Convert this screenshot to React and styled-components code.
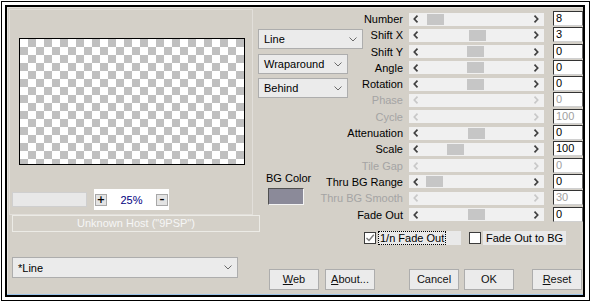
import React from 'react';
import styled, { createGlobalStyle } from 'styled-components';

const FONT = `"Liberation Sans", Arial, sans-serif`;

const Global = createGlobalStyle`
  html, body { margin: 0; padding: 0; background: #fff; }
  body { font-family: ${FONT}; font-size: 11px; color: #000; }
  * { box-sizing: border-box; }
`;

const Frame = styled.div`
  margin: 1px 0 0 1px;
  width: 589px;
  height: 300px;
  border: 1px solid #000;
  background: #fff;
  padding: 3px 4px 3px 3px;
`;

const Dialog = styled.div`
  width: 580px;
  height: 292px;
  border: 2px solid #000;
  background: #d4d0c8;
  box-shadow: inset 0 -1px 0 #9cc4ea, inset 1px 1px 0 #e4e1dc;
  display: grid;
  grid-template-columns: 246px 330px;
`;

const LeftCol = styled.div`
  display: flex;
  flex-direction: column;
  padding: 2px 0 0 2px;
`;

const PreviewPanel = styled.div`
  width: 244px;
  height: 206px;
  border: 1px solid #e2dfda;
  padding: 28px 0 0 2px;
  display: flex;
  flex-direction: column;
`;

const Preview = styled.div`
  width: 226px;
  height: 127px;
  margin-left: 7px;
  border: 1px solid #000;
  background-color: #fff;
  background-image: conic-gradient(#c0c0c0 25%, #fff 0 50%, #c0c0c0 0 75%, #fff 0);
  background-size: 16px 16px;
`;

const ZoomRow = styled.div`
  display: flex;
  align-items: center;
  margin-top: 24px;
  height: 21px;
`;

const ZoomField = styled.div`
  width: 75px;
  height: 15px;
  background: #e8e8e8;
  border: 1px solid #cfcfcf;
`;

const ZoomBox = styled.div`
  width: 75px;
  height: 21px;
  margin-left: 7px;
  background: #fff;
  display: flex;
  align-items: center;
  padding: 0 1px;
`;

const ZoomBtn = styled.div`
  width: 12px;
  height: 12px;
  background: #e4e4e4;
  border: 1px solid #a8a8a8;
  display: flex;
  align-items: center;
  justify-content: center;
  font-family: "DejaVu Sans", sans-serif;
  font-weight: bold;
  font-size: 10px;
  line-height: 1;
  color: #000;
`;

const ZoomText = styled.div`
  flex: 1;
  text-align: center;
  color: #000080;
`;

const HostBox = styled.div`
  margin: 0 0 0 3px;
  width: 248px;
  height: 17px;
  flex-shrink: 0;
  border: 1px solid #ecebe6;
  color: #f6f6f6;
  text-align: center;
  line-height: 15px;
`;

const Combo = styled.div`
  width: ${p => p.$w}px;
  height: ${p => p.$h || 20}px;
  margin-top: ${p => p.$mt || 0}px;
  margin-left: ${p => p.$ml || 0}px;
  background: #ebebeb;
  border: 1px solid #adadad;
  display: flex;
  align-items: center;
  justify-content: space-between;
  padding: 0 5px 0 5px;
  flex-shrink: 0;
`;

const RightCol = styled.div`
  display: flex;
  flex-direction: column;
`;

const TopArea = styled.div`
  display: flex;
`;

const SideCol = styled.div`
  width: 46px;
  display: flex;
  flex-direction: column;
  padding: 22px 0 0 5px;
`;

const BgLabel = styled.div`
  margin: 73px 0 0 8px;
  line-height: 14px;
  white-space: nowrap;
`;

const Swatch = styled.div`
  margin: 3px 0 0 10px;
  width: 36px;
  height: 17px;
  flex-shrink: 0;
  background: #8b8a99;
  border: 1px solid;
  border-color: #505050 #f4f4f4 #f4f4f4 #505050;
`;

const SliderTable = styled.div`
  margin-top: 4px;
  display: grid;
  grid-template-columns: 104px 141px 39px;
  grid-auto-rows: 16.3px;
`;

const Label = styled.div`
  text-align: right;
  white-space: nowrap;
  color: ${p => (p.$disabled ? '#a4a4a4' : '#000')};
  line-height: 16px;
`;

const Track = styled.div`
  position: relative;
  justify-self: end;
  width: 135px;
  height: 13px;
  margin-top: 1.5px;
  background: #f0f0f0;
  display: flex;
  align-items: center;
  justify-content: space-between;
  padding: 0 5px 0 4px;
  color: ${p => (p.$disabled ? '#c8c8c8' : '#404040')};
`;

const Thumb = styled.div`
  position: absolute;
  top: 1px;
  width: 17px;
  height: 11px;
  background: #c6c6c6;
`;

const NumBox = styled.div`
  justify-self: end;
  width: 30px;
  height: 15px;
  background: #fff;
  border: 1px solid;
  border-color: #333 #666 #d0d0d0 #333;
  padding-left: 2px;
  line-height: 13px;
  color: ${p => (p.$disabled ? '#a0a0a0' : '#000')};
`;

const CheckRow = styled.div`
  display: flex;
  align-items: center;
  margin-top: 8px;
  padding-left: 111px;
  height: 14px;
`;

const CheckBox = styled.div`
  width: 12px;
  height: 12px;
  background: #fff;
  border: 1px solid #3c3c3c;
  margin-left: ${p => p.$ml || 0}px;
  display: flex;
  align-items: center;
  justify-content: center;
  flex-shrink: 0;
`;

const CheckLabel = styled.div`
  width: 83px;
  height: 14px;
  margin-left: 2px;
  background: #e9e9e9;
  display: flex;
  align-items: center;
  padding-left: ${p => (p.$focus ? 0 : 3)}px;
  white-space: nowrap;
`;

const Focus = styled.span`
  outline: 1px dotted #000;
  outline-offset: -1px;
  padding: 0 2px;
  line-height: 14px;
`;

const ButtonRow = styled.div`
  display: flex;
  margin-top: 24px;
  padding-left: 16px;
`;

const Button = styled.div`
  width: 50px;
  height: 21px;
  margin-left: ${p => p.$ml || 0}px;
  background: #ebebeb;
  border: 1px solid #adadad;
  display: flex;
  align-items: center;
  justify-content: center;
  color: #111;
`;

const Chevron = ({ dir }) => (
  <svg width="6" height="8" viewBox="0 0 6 8">
    <path
      d={dir === 'left' ? 'M4.5 0.7 L1.3 4 L4.5 7.3' : 'M1.5 0.7 L4.7 4 L1.5 7.3'}
      fill="none"
      stroke="currentColor"
      strokeWidth="1.7"
    />
  </svg>
);

const Down = () => (
  <svg width="8" height="5" viewBox="0 0 8 5">
    <path d="M0.5 0.5 L4 4 L7.5 0.5" fill="none" stroke="#6a6a6a" strokeWidth="1" />
  </svg>
);

const Check = () => (
  <svg width="10" height="10" viewBox="0 0 10 10">
    <path d="M1.5 5 L4 7.5 L8.8 1.8" fill="none" stroke="#7a7a7a" strokeWidth="1.4" />
  </svg>
);

const rows = [
  { label: 'Number', value: '8', thumb: 18 },
  { label: 'Shift X', value: '3', thumb: 60 },
  { label: 'Shift Y', value: '0', thumb: 58 },
  { label: 'Angle', value: '0', thumb: 58 },
  { label: 'Rotation', value: '0', thumb: 58 },
  { label: 'Phase', value: '0', disabled: true },
  { label: 'Cycle', value: '100', disabled: true },
  { label: 'Attenuation', value: '0', thumb: 59 },
  { label: 'Scale', value: '100', thumb: 38 },
  { label: 'Tile Gap', value: '0', disabled: true },
  { label: 'Thru BG Range', value: '0', thumb: 17 },
  { label: 'Thru BG Smooth', value: '30', disabled: true },
  { label: 'Fade Out', value: '0', thumb: 59 },
];

export default function App() {
  return (
    <>
      <Global />
      <Frame>
        <Dialog>
          <LeftCol>
            <PreviewPanel>
              <Preview />
              <ZoomRow>
                <ZoomField />
                <ZoomBox>
                  <ZoomBtn>+</ZoomBtn>
                  <ZoomText>25%</ZoomText>
                  <ZoomBtn>–</ZoomBtn>
                </ZoomBox>
              </ZoomRow>
            </PreviewPanel>
            <HostBox>Unknown Host ("9PSP")</HostBox>
            <Combo $w={226} $h={21} $mt={25} $ml={3}>
              <span>*Line</span>
              <Down />
            </Combo>
          </LeftCol>
          <RightCol>
            <TopArea>
              <SideCol>
                <Combo $w={105} $mt={0}>
                  <span>Line</span>
                  <Down />
                </Combo>
                <Combo $w={90} $mt={5}>
                  <span>Wraparound</span>
                  <Down />
                </Combo>
                <Combo $w={90} $mt={4}>
                  <span>Behind</span>
                  <Down />
                </Combo>
                <BgLabel>BG Color</BgLabel>
                <Swatch />
              </SideCol>
              <SliderTable>
                {rows.map(r => (
                  <React.Fragment key={r.label}>
                    <Label $disabled={r.disabled}>{r.label}</Label>
                    <Track $disabled={r.disabled}>
                      <Chevron dir="left" />
                      {!r.disabled && <Thumb style={{ left: r.thumb }} />}
                      <Chevron dir="right" />
                    </Track>
                    <NumBox $disabled={r.disabled}>{r.value}</NumBox>
                  </React.Fragment>
                ))}
              </SliderTable>
            </TopArea>
            <CheckRow>
              <CheckBox>
                <Check />
              </CheckBox>
              <CheckLabel $focus>
                <Focus>1/n Fade Out</Focus>
              </CheckLabel>
              <CheckBox $ml={8} />
              <CheckLabel>Fade Out to BG</CheckLabel>
            </CheckRow>
            <ButtonRow>
              <Button>
                <span><u>W</u>eb</span>
              </Button>
              <Button $ml={6}>
                <span><u>A</u>bout...</span>
              </Button>
              <Button $ml={34}>Cancel</Button>
              <Button $ml={5}>OK</Button>
              <Button $ml={18}>
                <span><u>R</u>eset</span>
              </Button>
            </ButtonRow>
          </RightCol>
        </Dialog>
      </Frame>
    </>
  );
}
